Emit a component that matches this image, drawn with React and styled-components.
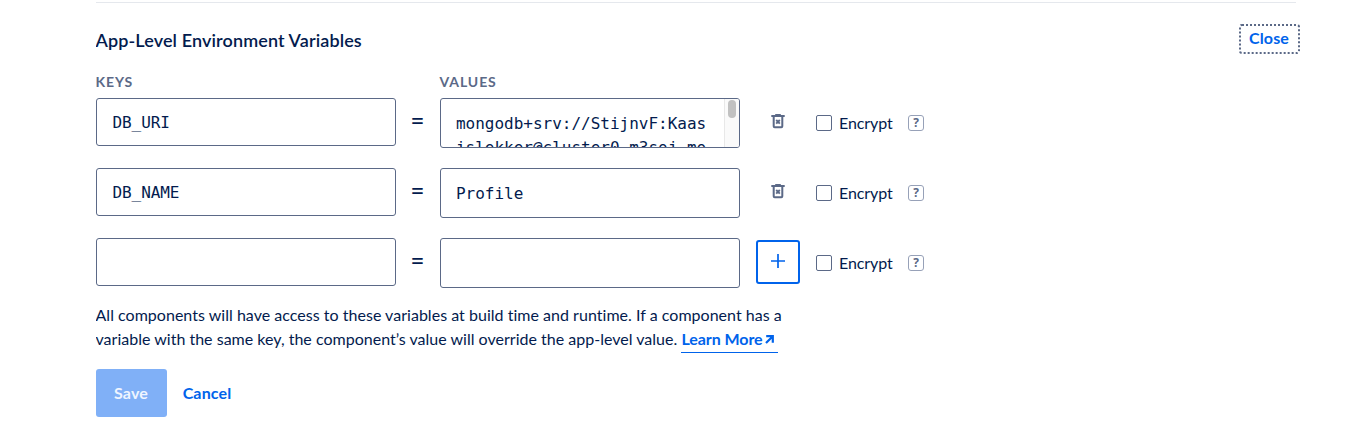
import React from "react";
import styled, { createGlobalStyle } from "styled-components";

const Global = createGlobalStyle`
  *, *::before, *::after { box-sizing: border-box; }
  body { margin: 0; background: #fff; color: #031b4e; font-family: Lato, "Open Sans", sans-serif; font-size: 16px; line-height: 24px; font-variant-ligatures: none; }
  button, input { font: inherit; color: inherit; }
  p, h2 { margin: 0; }
`;

const Panel = styled.section`
  height: 426px;
  margin-left: 96px;
  width: 1204px;
  padding-top: 2px;
  overflow: hidden;
`;
const Divider = styled.div`
  width: 1200px;
  height: 1px;
  background: #e5e8ed;
`;
const Header = styled.header`
  display: flex;
  justify-content: space-between;
  padding-top: 21px;
  height: 70px;
`;
const Title = styled.h2`
  font-size: 18px;
  line-height: 32px;
  font-weight: 600;
  letter-spacing: 0.12px;
  margin-left: -0.5px;
`;
const CloseButton = styled.button`
  width: 61px;
  height: 30px;
  padding: 0 1px 2px 0;
  border: 2px dotted #5b6987;
  border-radius: 3px;
  background: none;
  color: #0063eb;
  font-weight: 700;
  letter-spacing: 0.15px;
  line-height: 24px;
`;
const Grid = styled.div`
  display: grid;
  grid-template-columns: 300px 44px 300px 76px auto;
  justify-content: start;
`;
const Label = styled.div`
  grid-column: ${(p) => p.$col};
  height: 25px;
  line-height: 18px;
  font-size: 14px;
  font-weight: 700;
  letter-spacing: 0.9px;
  margin-left: -0.5px;
  color: #5b6987;
`;
const KeyInput = styled.input`
  width: 300px;
  height: 48px;
  padding: 0 15.5px;
  border: 1px solid #5b6987;
  border-radius: 3px;
  outline: 0;
  background: #fff;
  && { font-family: "DejaVu Sans Mono", monospace; font-size: 16px; letter-spacing: -0.08px; }
`;
const Equals = styled.span`
  height: 48px;
  line-height: 44px;
  font-size: 24px;
  font-weight: 500;
  text-align: center;
  padding-right: 1px;
`;
const ValueBox = styled.div`
  display: flex;
  width: 300px;
  height: 50px;
  margin-bottom: 20px;
  border: 1px solid #5b6987;
  border-radius: 3px;
  overflow: hidden;
`;
const ValueText = styled.div`
  flex: 1;
  min-width: 0;
  padding: 13px 15px 0;
  font-family: "DejaVu Sans Mono", monospace;
  font-size: 16px;
  line-height: 24px;
  letter-spacing: -0.01px;
  white-space: pre;
`;
const ScrollTrack = styled.div`
  width: 15px;
  padding: 1px 3px;
  border-left: 1px solid #e8e8e8;
  background: #fafafa;
`;
const ScrollThumb = styled.div`
  width: 8px;
  height: 18px;
  border-radius: 4px;
  background: #c1c1c1;
`;
const Action = styled.div`
  display: flex;
  justify-content: center;
  height: 48px;
`;
const IconButton = styled.button`
  display: flex;
  align-items: center;
  justify-content: center;
  width: 44px;
  height: 44px;
  margin-top: 2px;
  padding: 0 0 2px;
  border: 2px solid ${(p) => (p.$outlined ? "#0063eb" : "transparent")};
  border-radius: 3px;
  background: none;
`;
const Encrypt = styled.label`
  display: flex;
  align-items: center;
  height: 50px;
`;
const Checkbox = styled.input`
  appearance: none;
  width: 16px;
  height: 16px;
  margin: 0 7px 0 0;
  border: 1px solid #5b6987;
  border-radius: 2px;
`;
const EncryptText = styled.span`
  width: 69px;
  padding-bottom: 1px;
  letter-spacing: -0.1px;
`;
const Help = styled.span`
  width: 16px;
  height: 16px;
  border: 1.5px solid #97a1b8;
  border-radius: 3px;
  color: #5b6987;
  font: 700 12px/14px "Open Sans", sans-serif;
  text-align: center;
`;
const Note = styled.p`
  margin: -5px 0 0 -0.5px;
`;
const NoteLine = styled.span`
  display: block;
  white-space: nowrap;
  letter-spacing: ${(p) => p.$spacing};
`;
const LearnMore = styled.a`
  display: inline-flex;
  align-items: center;
  width: 97px;
  height: 26px;
  padding-bottom: 1px;
  vertical-align: top;
  border-bottom: 1px solid #0063eb;
  color: #0063eb;
  font-weight: 700;
  letter-spacing: -0.06px;
`;
const LinkText = styled.span`
  width: 84px;
`;
const Footer = styled.footer`
  display: flex;
  margin-top: 16px;
`;
const Button = styled.button`
  height: 48px;
  width: ${(p) => (p.$primary ? "71px" : "81px")};
  padding: 0 1px 1px 0;
  border: 0;
  border-radius: 3px;
  background: ${(p) => (p.$primary ? "#80b0f7" : "none")};
  color: ${(p) => (p.$primary ? "#eff5ff" : "#0063eb")};
  font-weight: 700;
  letter-spacing: 0.15px;
`;

const TrashIcon = () => (
  <svg width="14" height="15" viewBox="0 0 14 15" fill="none" stroke="#5b6987">
    <path d="M0.3 2.1H13.7M4.2 1H9.8" strokeWidth="2" />
    <path d="M2.7 2.5V12.2Q2.7 13.2 3.7 13.2H10.3Q11.3 13.2 11.3 12.2V2.5" strokeWidth="2" />
    <path d="M5.2 6L8.8 9.6M8.8 6L5.2 9.6" strokeWidth="1.9" />
  </svg>
);
const PlusIcon = () => (
  <svg width="14" height="14" viewBox="0 0 14 14" stroke="#0063eb" strokeWidth="1.7">
    <path d="M7 0V14M0 7H14" />
  </svg>
);
const ArrowIcon = () => (
  <svg width="9" height="9" viewBox="0 0 9 9" fill="none" stroke="#0063eb" strokeWidth="2.2">
    <path d="M1.2 1.2H7.8V7.8M7.8 1.2L1 8" />
  </svg>
);

const rows = [
  { key: "DB_URI", value: "mongodb+srv://StijnvF:Kaas\nislekker@cluster0.m3soj.mo", scroll: true },
  { key: "DB_NAME", value: "Profile" },
  { key: "", value: "", add: true },
];

const VariableRow = ({ item }) => (
  <>
    <KeyInput defaultValue={item.key} aria-label="Key" />
    <Equals>=</Equals>
    <ValueBox>
      <ValueText>{item.value}</ValueText>
      {item.scroll && <ScrollTrack><ScrollThumb /></ScrollTrack>}
    </ValueBox>
    <Action>
      <IconButton $outlined={item.add} aria-label={item.add ? "Add" : "Delete"}>
        {item.add ? <PlusIcon /> : <TrashIcon />}
      </IconButton>
    </Action>
    <Encrypt>
      <Checkbox type="checkbox" />
      <EncryptText>Encrypt</EncryptText>
      <Help>?</Help>
    </Encrypt>
  </>
);

export default function App() {
  return (
    <>
      <Global />
      <Panel>
        <Divider />
        <Header>
          <Title>App-Level Environment Variables</Title>
          <CloseButton>Close</CloseButton>
        </Header>
        <Grid>
          <Label $col="1 / 3">KEYS</Label>
          <Label $col="3 / 6">VALUES</Label>
          {rows.map((item, i) => <VariableRow key={i} item={item} />)}
        </Grid>
        <Note>
          <NoteLine $spacing="0.025px">All components will have access to these variables at build time and runtime. If a component has a</NoteLine>
          <NoteLine $spacing="0.012px">
            variable with the same key, the component’s value will override the app-level value.{" "}
            <LearnMore><LinkText>Learn More</LinkText><ArrowIcon /></LearnMore>
          </NoteLine>
        </Note>
        <Footer>
          <Button $primary>Save</Button>
          <Button>Cancel</Button>
        </Footer>
      </Panel>
    </>
  );
}
